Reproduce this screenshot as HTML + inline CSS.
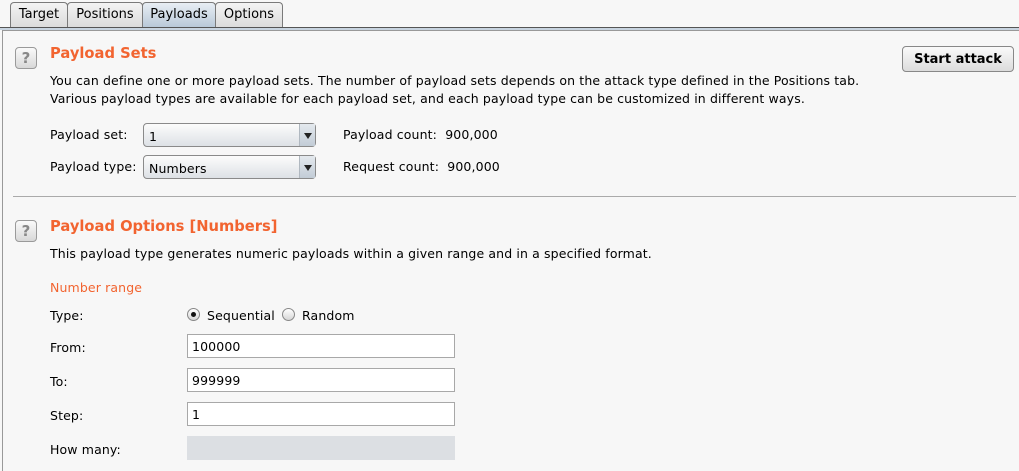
<!DOCTYPE html>
<html><head><style>
*{margin:0;padding:0;box-sizing:border-box}
body{width:1019px;height:471px;background:#f7f7f7;font-family:"DejaVu Sans","Liberation Sans",sans-serif;font-size:12.5px;letter-spacing:0.13px;color:#000;position:relative;overflow:hidden}
.a{position:absolute;white-space:nowrap}
.tab{position:absolute;top:2px;height:25px;border:1px solid #7a7a7a;border-bottom:none;border-radius:4px 4px 0 0;background:linear-gradient(#f4f4f4,#dcdcdc);font-size:13px;letter-spacing:0;padding-top:4px;text-align:center}
.tab.sel{background:linear-gradient(#e8eef4,#b9c9d8)}
.h{color:#f26430;font-weight:bold;font-size:14.7px;letter-spacing:0}
.q{position:absolute;width:22px;height:22px;border:1px solid #9a9a9a;border-radius:4px;background:linear-gradient(#fafafa,#d8d8d8);color:#888;font-weight:bold;font-size:15px;text-align:center;line-height:20px}
.sel2{position:absolute;height:24px;border:1px solid #8a8a8a;border-radius:4px;background:linear-gradient(#fcfcfc,#dde1e6);padding:5px 0 0 5px}
.sel2 .ar{position:absolute;right:0;top:0;width:16px;height:22px;border-left:1px solid #b0b8c0;background:linear-gradient(#e4e9ee,#c2ccd6)}
.sel2 .ar:after{content:"";position:absolute;left:4px;top:9px;border-left:4px solid transparent;border-right:4px solid transparent;border-top:6px solid #222}
.inp{position:absolute;left:187px;width:268px;height:24px;border:1px solid #a8a8a8;background:#fff;padding:4px 0 0 4px}
.rad{position:absolute;width:13px;height:13px;border:1px solid #888;border-radius:50%;background:linear-gradient(#fff,#d6d6d6)}
</style></head><body>
<div class="tab" style="left:10px;width:58px">Target</div>
<div class="tab" style="left:67px;width:76px">Positions</div>
<div class="tab sel" style="left:142px;width:74px">Payloads</div>
<div class="tab" style="left:215px;width:68px">Options</div>
<div class="a" style="left:0;top:27px;width:1019px;height:1px;background:#555"></div>
<div class="a" style="left:0;top:28px;width:1019px;height:2px;background:#c8d4e0"></div>
<div class="a" style="left:2px;top:30px;width:1px;height:441px;background:#999"></div>
<div class="a" style="left:2px;top:30px;width:1017px;height:1px;background:#999"></div>

<div class="q" style="left:15px;top:47px">?</div>
<div class="a h" style="left:50px;top:45px">Payload Sets</div>
<div class="a" style="left:50px;top:73px">You can define one or more payload sets. The number of payload sets depends on the attack type defined in the Positions tab.</div>
<div class="a" style="left:50px;top:91px">Various payload types are available for each payload set, and each payload type can be customized in different ways.</div>
<div class="a" style="left:902px;top:46px;width:112px;height:26px;border:1px solid #888;border-radius:4px;background:linear-gradient(#fafafa,#dcdcdc);font-weight:bold;font-size:13px;letter-spacing:0;text-align:center;padding-top:5px">Start attack</div>

<div class="a" style="left:50px;top:127px">Payload set:</div>
<div class="sel2" style="left:143px;top:123px;width:173px">1<div class="ar"></div></div>
<div class="a" style="left:343px;top:127px">Payload count:&nbsp; 900,000</div>
<div class="a" style="left:50px;top:159px">Payload type:</div>
<div class="sel2" style="left:143px;top:155px;width:173px">Numbers<div class="ar"></div></div>
<div class="a" style="left:343px;top:159px">Request count:&nbsp; 900,000</div>

<div class="a" style="left:13px;top:196px;width:1003px;height:1px;background:#aaa"></div>

<div class="q" style="left:15px;top:220px">?</div>
<div class="a h" style="left:50px;top:218px">Payload Options [Numbers]</div>
<div class="a" style="left:50px;top:246px">This payload type generates numeric payloads within a given range and in a specified format.</div>
<div class="a" style="left:50px;top:280px;color:#f26430">Number range</div>
<div class="a" style="left:50px;top:308px">Type:</div>
<div class="rad" style="left:187px;top:308px"><div style="position:absolute;left:3px;top:3px;width:5px;height:5px;border-radius:50%;background:#111"></div></div>
<div class="a" style="left:207px;top:308px">Sequential</div>
<div class="rad" style="left:282px;top:308px"></div>
<div class="a" style="left:302px;top:308px">Random</div>
<div class="a" style="left:50px;top:340px">From:</div>
<div class="inp" style="top:334px">100000</div>
<div class="a" style="left:50px;top:374px">To:</div>
<div class="inp" style="top:368px">999999</div>
<div class="a" style="left:50px;top:408px">Step:</div>
<div class="inp" style="top:402px">1</div>
<div class="a" style="left:50px;top:442px">How many:</div>
<div class="inp" style="top:436px;background:#dcdfe3;border-color:#dcdfe3"></div>
</body></html>
